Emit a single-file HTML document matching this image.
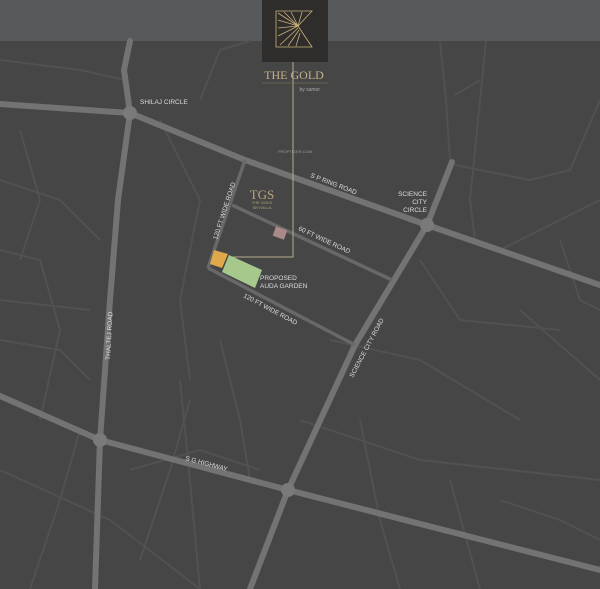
<!DOCTYPE html>
<html><head><style>
html,body{margin:0;padding:0;background:#464646;}
svg{display:block}
text{font-family:"Liberation Sans",sans-serif;}
</style></head><body>
<svg width="600" height="589" viewBox="0 0 600 589" xmlns="http://www.w3.org/2000/svg">
<rect width="600" height="589" fill="#464646"/>
<rect width="600" height="41" fill="#58595b"/>
<g stroke="#515151" stroke-width="2" fill="none">
<path d="M440 41 L446 100 L450 160"/><path d="M486 41 L470 200 L475 240"/>
<path d="M455 95 L480 80"/><path d="M600 100 L570 170 L530 180 L455 165"/>
<path d="M0 180 L60 200 L100 240"/><path d="M0 300 L90 310"/><path d="M0 470 L110 520 L200 589"/>
<path d="M30 589 L60 500 L80 430"/><path d="M140 560 L170 470 L190 400"/>
<path d="M180 380 L188 460 L200 589"/><path d="M200 100 L220 50 L250 41"/>
<path d="M0 60 L80 70 L125 80"/><path d="M160 120 L200 200 L180 300 L190 380"/>
<path d="M300 420 L420 460 L600 480"/><path d="M420 260 L460 320 L560 330"/>
<path d="M520 310 L600 380"/><path d="M360 420 L380 520 L400 589"/>
<path d="M450 480 L480 589"/><path d="M330 340 L420 360 L520 420"/>
<path d="M0 250 L40 260 L60 330 L40 420"/><path d="M220 340 L240 420 L250 480"/>
<path d="M560 240 L580 300 L600 310"/><path d="M500 500 L560 520 L600 540"/>
<path d="M0 340 L60 350 L90 380"/><path d="M130 470 L200 450 L260 470"/>
<path d="M500 250 L560 220 L600 200"/><path d="M20 130 L40 200 L20 260"/>
</g>
<g stroke="#737373" stroke-width="6" fill="none" stroke-linecap="round">
<path d="M0 104 L130 113 L245 160 L427 225 L600 285"/>
<path d="M130 41 L124 70 L130 113 L118 200 L110 300 L100 440 L95 589"/>
<path d="M0 396 L100 440 L288 490 L600 570"/>
<path d="M452 162 L427 225 L355 345 L288 490 L250 589"/>
</g>
<g stroke="#686868" stroke-width="3.5" fill="none">
<path d="M245 160 L208 268"/><path d="M232 205 L392 280"/><path d="M208 268 L355 345"/>
</g>
<g fill="#7a7a7a"><circle cx="130" cy="113" r="7"/><circle cx="427" cy="225" r="7"/><circle cx="100" cy="440" r="7"/><circle cx="288" cy="490" r="7"/></g>
<path d="M293 62 V257 H232" stroke="#b5a98a" stroke-width="1" fill="none"/>
<rect x="274" y="228" width="12" height="10" fill="#a88a88" transform="rotate(20 280 233)"/>
<polygon points="214,250 228,254 222,268 210,264" fill="#e0a84a"/>
<polygon points="229,255 262,270 255,288 222,272" fill="#a6c88c"/>
<rect x="262" y="0" width="66" height="62" fill="#2e2d2b"/>
<g stroke="#c9b27a" stroke-width="0.8" fill="none">
<path d="M276 11 H312 L298 26 L312 47 H276 Z"/>
<path d="M298 26 L278 13 M298 26 L284 12 M298 26 L291 12 M298 26 L278 20 M298 26 L278 28 M298 26 L278 36 M298 28 L280 45 M299 30 L288 46 M300 33 L296 46 M298 26 L302 12"/>
</g>
<text x="294" y="79" text-anchor="middle" font-size="12" fill="#c4b18a" style="font-family:'Liberation Serif',serif">THE GOLD</text>
<line x1="262" y1="83" x2="328" y2="83" stroke="#8a7d60" stroke-width="0.5"/>
<text x="320" y="91" text-anchor="end" font-size="5" fill="#aaa">by samor</text>
<text x="295" y="153" text-anchor="middle" font-size="4" fill="#999">PROPTIGER.COM</text>
<text x="262" y="199" text-anchor="middle" font-size="13" fill="#b8a67e" style="font-family:'Liberation Serif',serif">TGS</text>
<text x="262" y="204" text-anchor="middle" font-size="4" fill="#b8a67e">THE GOLD</text>
<text x="262" y="209" text-anchor="middle" font-size="4" fill="#b8a67e">SKYVILLA</text>
<g font-size="6.5" fill="#ddd">
<text x="140" y="104">SHILAJ CIRCLE</text>
<text transform="translate(310 177) rotate(21)">S P RING ROAD</text>
<text x="427" y="196" text-anchor="end">SCIENCE</text>
<text x="427" y="204" text-anchor="end">CITY</text>
<text x="427" y="212" text-anchor="end">CIRCLE</text>
<text transform="translate(298 230) rotate(25)">60 FT WIDE ROAD</text>
<text transform="translate(217 240) rotate(-72)">120 FT WIDE ROAD</text>
<text x="260" y="280">PROPOSED</text><text x="260" y="288">AUDA GARDEN</text>
<text transform="translate(243 297) rotate(28)">120 FT WIDE ROAD</text>
<text transform="translate(353 378) rotate(-62)">SCIENCE CITY ROAD</text>
<text transform="translate(110 360) rotate(-87)">THALTEJ ROAD</text>
<text transform="translate(185 460) rotate(15)">S G HIGHWAY</text>
</g>
</svg>
</body></html>
